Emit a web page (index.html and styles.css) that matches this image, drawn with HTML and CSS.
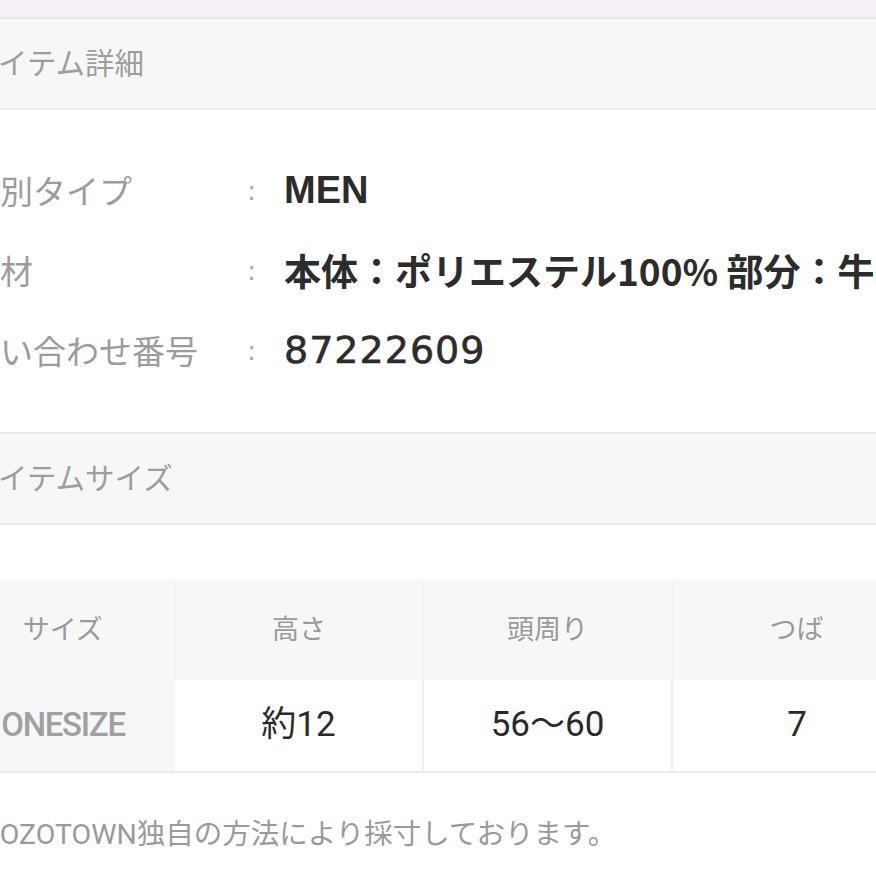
FILE: index.html
```html
<!DOCTYPE html>
<html lang="ja">
<head>
<meta charset="utf-8">
<title>アイテム詳細</title>
<link rel="stylesheet" href="styles.css">
</head>
<body>
<div class="topbar"></div>
<main class="page">
  <section class="sec">
    <h2 class="sec-head">アイテム詳細</h2>
    <dl class="specs">
      <div class="spec"><dt>性別タイプ</dt><dd class="colon">:</dd><dd class="val latin">MEN</dd></div>
      <div class="spec"><dt>素材</dt><dd class="colon">:</dd><dd class="val">本体：ポリエステル100% 部分：牛革</dd></div>
      <div class="spec"><dt>問い合わせ番号</dt><dd class="colon">:</dd><dd class="val num">87222609</dd></div>
    </dl>
  </section>
  <section class="sec">
    <h2 class="sec-head">アイテムサイズ</h2>
    <table class="size">
      <colgroup><col class="c1"><col class="c2"><col class="c3"><col class="c4"></colgroup>
      <thead>
        <tr><th>サイズ</th><th>高さ</th><th>頭周り</th><th>つば</th></tr>
      </thead>
      <tbody>
        <tr><th class="rowhead">ONESIZE</th><td>約12</td><td>56〜60</td><td>7</td></tr>
      </tbody>
    </table>
    <p class="note">ZOZOTOWN独自の方法により採寸しております。</p>
  </section>
</main>
</body>
</html>
```
FILE: styles.css
```css
html, body {
  margin: 0;
  padding: 0;
  background: #ffffff;
}
body {
  width: 876px;
  height: 876px;
  overflow: hidden;
  font-family: "Noto Sans CJK JP", sans-serif;
  color: #333;
}
.topbar {
  height: 17px;
  background: #f6f0f7;
}
.page {
  margin-left: -33px;
  width: 1000px;
}
.sec-head {
  margin: 0;
  height: 89px;
  line-height: 85px;
  padding-left: 3px;
  background: #f7f7f7;
  border-top: 2px solid #e9e8ea;
  border-bottom: 2px solid #ebebeb;
  font-size: 29.5px;
  font-weight: 400;
  color: #9d9d9d;
}
.specs {
  margin: 0;
  padding: 40px 0 42px;
}
.spec {
  display: grid;
  grid-template-columns: 280px 37px 1fr;
  height: 80px;
  align-items: center;
}
.spec dt {
  font-size: 33px;
  color: #9c9c9c;
}
.spec dd {
  margin: 0;
}
.colon {
  font-family: "DejaVu Sans", sans-serif;
  font-size: 27px;
  color: #aaa;
}
.val {
  font-family: "Noto Sans CJK JP", sans-serif;
  font-size: 37px;
  font-weight: 700;
  color: #2c2c2c;
  white-space: nowrap;
}
.latin {
  font-family: "Liberation Sans", sans-serif;
  font-size: 38px;
}
.num {
  font-family: "DejaVu Sans", sans-serif;
  font-size: 38px;
  font-weight: 400;
  letter-spacing: 1px;
  -webkit-text-stroke: 0.6px #2c2c2c;
}
.size {
  margin: 55px 0 0 -16px;
  border-collapse: collapse;
  table-layout: fixed;
  width: 970px;
}
.c1 { width: 224px; }
.c2 { width: 248px; }
.c3 { width: 249px; }
.c4 { width: 249px; }
.size thead th {
  height: 100px;
  padding: 0 0 6px;
  box-sizing: border-box;
  background: #f7f7f7;
  border-right: 1px solid #f0f0f0;
  font-size: 27px;
  font-weight: 400;
  color: #9a9a9a;
  text-align: center;
}
.size tbody tr {
  border-bottom: 2px solid #ececec;
}
.size tbody th,
.size tbody td {
  height: 92px;
  padding: 0 0 2px;
  box-sizing: border-box;
  line-height: 1;
  text-align: center;
  font-family: Roboto, "Noto Sans CJK JP", sans-serif;
}
.rowhead {
  background: #f7f7f7;
  font-size: 33px;
  font-weight: 500;
  color: #a0a0a0;
  letter-spacing: -1.3px;
}
.size td {
  background: #fff;
  border-left: 2px solid #eeeeee;
  font-size: 35px;
  color: #2a2a2a;
}
.size td:first-of-type {
  border-left: none;
}
.note {
  margin: 42px 0 0;
  padding-left: 16px;
  line-height: 40px;
  font-family: Roboto, "Noto Sans CJK JP", sans-serif;
  font-size: 28.5px;
  color: #9a9a9a;
}
```
